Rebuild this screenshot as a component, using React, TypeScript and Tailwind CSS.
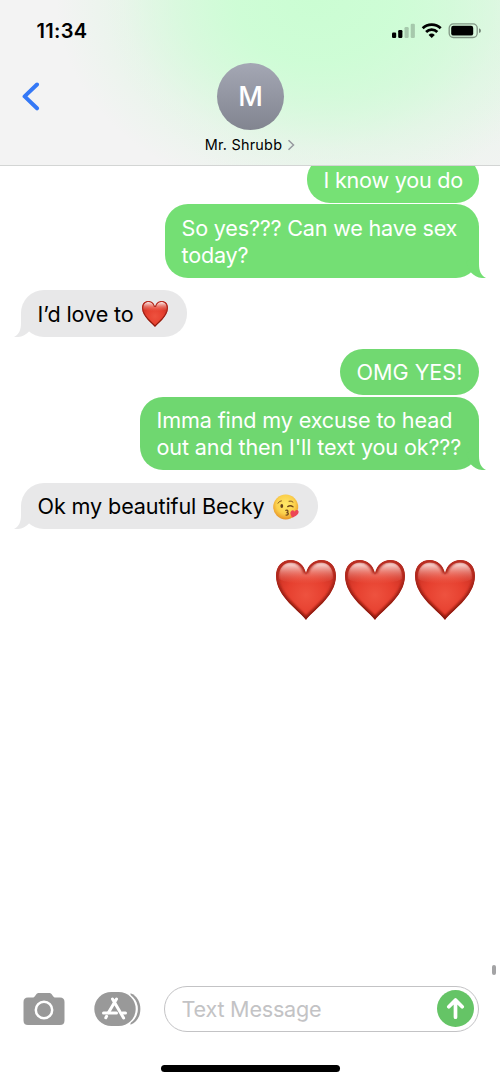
import type { ReactNode } from 'react'
import clsx from 'clsx'

interface BubbleProps {
  sent?: boolean
  tail?: boolean
  className?: string
  children: ReactNode
}

function Tail({ sent }: { sent?: boolean }) {
  return (
    <svg
      viewBox="0 0 20 24"
      className={clsx(
        'absolute bottom-0 h-6 w-5 fill-current',
        sent ? '-right-[7px]' : '-left-[7px] -scale-x-100'
      )}
    >
      <path d="M13 0V10C13 17 15 21.5 20 24C14 24.6 8.5 22.5 5 18.5L0 8Z" />
    </svg>
  )
}

function Bubble({ sent, tail, className, children }: BubbleProps) {
  return (
    <div
      className={clsx(
        'relative rounded-[23px] pt-[10.5px] pl-[16.5px] text-[21.6px] leading-[27px] whitespace-nowrap',
        sent ? 'self-end' : 'self-start bg-[#e8e8e9] text-[#e8e8e9]',
        className
      )}
    >
      {tail && <Tail sent={sent} />}
      <div className={clsx('relative', sent ? 'text-white' : 'text-black')}>{children}</div>
    </div>
  )
}

function Heart({ id, className }: { id: string; className?: string }) {
  const shape =
    'M30 60C25 52 0 37 0 16C0 6 6 0 15 0C22 0 28 5 30 13C32 5 38 0 45 0C54 0 60 6 60 16C60 37 35 52 30 60Z'
  return (
    <svg viewBox="0 0 60 60" className={className}>
      <defs>
        <radialGradient id={`${id}-body`} cx="30" cy="35" r="38" gradientUnits="userSpaceOnUse">
          <stop offset="0" stopColor="#ee523f" />
          <stop offset="0.5" stopColor="#e6402f" />
          <stop offset="1" stopColor="#c52d21" />
        </radialGradient>
        <linearGradient id={`${id}-shine`} x1="0" y1="2" x2="0" y2="24" gradientUnits="userSpaceOnUse">
          <stop offset="0" stopColor="#fff" stopOpacity="0.95" />
          <stop offset="0.45" stopColor="#ffd0c8" stopOpacity="0.45" />
          <stop offset="1" stopColor="#f0705f" stopOpacity="0" />
        </linearGradient>
        <linearGradient id={`${id}-edge`} x1="0" y1="0" x2="0" y2="60" gradientUnits="userSpaceOnUse">
          <stop offset="0" stopColor="#b82e24" />
          <stop offset="1" stopColor="#861509" />
        </linearGradient>
        <clipPath id={`${id}-clip`}>
          <path d={shape} />
        </clipPath>
        <filter id={`${id}-soft`}>
          <feGaussianBlur stdDeviation="1.2" />
        </filter>
      </defs>
      <g clipPath={`url(#${id}-clip)`}>
        <path d={shape} fill={`url(#${id}-body)`} />
        <path
          d="M3 19C2 8 8 2.5 15 2.5C22 2.5 27 7 30 15C33 7 38 2.5 45 2.5C52 2.5 58 8 57 19C48 25 12 25 3 19Z"
          fill={`url(#${id}-shine)`}
        />
        <path d={shape} fill="none" stroke={`url(#${id}-edge)`} strokeWidth="5" filter={`url(#${id}-soft)`} />
      </g>
    </svg>
  )
}

function KissFace({ className }: { className?: string }) {
  return (
    <svg viewBox="0 0 26 26" className={className}>
      <defs>
        <radialGradient id="face" cx="0.5" cy="0.4" r="0.62">
          <stop offset="0" stopColor="#ffe969" />
          <stop offset="0.6" stopColor="#fbd04c" />
          <stop offset="1" stopColor="#e58d22" />
        </radialGradient>
      </defs>
      <circle cx="12.7" cy="13" r="12.5" fill="url(#face)" />
      <g fill="none" stroke="#70451a" strokeLinecap="round">
        <path d="M5 9.2Q6.3 6.8 8.4 6.8M16 7.2Q18.4 6.4 20 8" strokeWidth="0.9" />
        <path d="M14.7 12.6Q17.3 10.8 20 12.8" strokeWidth="1.3" />
        <path d="M12.8 16.3C15.4 15.8 15.8 18 13.5 18.6C16.3 18.7 15.8 21.3 13 21" strokeWidth="1.2" />
      </g>
      <ellipse cx="8.8" cy="12" rx="1.4" ry="2" fill="#65401b" />
      <path
        d="M19.3 23.6C17.7 21.2 16.4 18.6 18.2 16.9C19.7 15.6 21.1 16.5 21.4 17.8C22.4 15.8 24.8 15.5 25.5 17.3C26.3 19.8 22.8 22.5 19.3 23.6Z"
        fill="#ec4656"
      />
    </svg>
  )
}

function StatusIcons() {
  return (
    <svg viewBox="0 0 90 16" className="h-4 w-[90px]">
      <rect x="0" y="9.5" width="4.2" height="5.5" rx="1.2" />
      <rect x="6.2" y="7" width="4.2" height="8" rx="1.2" />
      <rect x="12.5" y="4" width="4.2" height="11" rx="1.2" opacity="0.2" />
      <rect x="18.7" y="0.8" width="4.2" height="14.2" rx="1.2" opacity="0.2" />
      <g fill="none" stroke="#000" strokeWidth="2.8">
        <path d="M30.7 5.3A13 13 0 0 1 48.7 5.3" />
        <path d="M34.1 9A8 8 0 0 1 45.3 9" />
      </g>
      <path d="M39.7 15L36.6 11.9A4.5 4.5 0 0 1 42.8 11.9Z" />
      <rect x="57.2" y="0.9" width="28" height="13.6" rx="4.2" fill="none" stroke="#000" strokeOpacity="0.4" strokeWidth="1.3" />
      <rect x="59.2" y="2.8" width="22" height="9.8" rx="2.2" />
      <path d="M87 5.3Q89 6 89 7.7T87 10.1Z" opacity="0.45" />
    </svg>
  )
}

function Header() {
  return (
    <header className="relative z-10 h-[166px] shrink-0 border-b border-[#d3d5d4] bg-[#f3f3f3] bg-[radial-gradient(ellipse_225px_175px_at_315px_0px,#cbfdd3_0%,rgba(205,253,213,0.95)_35%,rgba(208,251,215,0.7)_60%,rgba(215,248,220,0.35)_85%,rgba(243,243,243,0)_115%),radial-gradient(ellipse_250px_190px_at_380px_0px,rgba(205,252,212,0.7)_0%,rgba(208,251,215,0.5)_45%,rgba(225,246,228,0.3)_80%,rgba(243,243,243,0)_110%)]">
      <div className="flex h-[60px] items-center justify-between pl-[36.5px] pr-[18px] pt-[2px]">
        <span className="text-[20px] font-semibold tracking-[0.3px]">11:34</span>
        <StatusIcons />
      </div>
      <div className="grid grid-cols-[1fr_auto_1fr] pt-[3px]">
        <svg viewBox="0 0 20 30" className="ml-[20px] mt-[19px] h-[30px] w-5 fill-none stroke-[#3478f6]">
          <path d="M17 2.5L4.6 14.4L17 26.3" strokeWidth="4" strokeLinecap="round" strokeLinejoin="round" />
        </svg>
        <div className="flex flex-col items-center">
          <div className="ml-px flex size-[67px] items-center justify-center rounded-full bg-linear-to-b from-[#a4a7b4] to-[#828590] pt-[2px] text-[27px] font-medium text-white">
            M
          </div>
          <div className="mt-[4.5px] flex items-center gap-[5px] text-[14.4px] leading-5">
            <span className="tracking-[0.25px]">Mr. Shrubb</span>
            <svg viewBox="0 0 8 12" className="h-3 w-2 fill-none stroke-[#96989f]">
              <path d="M1.5 1.2L6.5 6L1.5 10.8" strokeWidth="1.5" />
            </svg>
          </div>
        </div>
      </div>
    </header>
  )
}

function Composer() {
  return (
    <footer className="flex h-[98px] shrink-0 flex-col items-center">
      <div className="flex h-[47px] w-full items-center pl-[22.5px]">
        <svg viewBox="0 0 42 34" className="h-[34px] w-[42px] fill-[#999]">
          <path d="M5 5.5H10C11.5 5.5 12.2 3.5 13.5 2C14.3 1.2 15 1 16 1H26C27 1 27.7 1.2 28.5 2C29.8 3.5 30.5 5.5 32 5.5H37Q41.5 5.5 41.5 10V28.5Q41.5 33 37 33H5Q0.5 33 0.5 28.5V10Q0.5 5.5 5 5.5Z" />
          <circle cx="21" cy="18" r="8.2" fill="none" stroke="#fff" strokeWidth="2.5" />
        </svg>
        <svg viewBox="0 0 48 34" className="ml-[29px] h-[34px] w-12 fill-[#999]">
          <path d="M36.5 1.2C49.7 6 49.7 28 36.5 32.8Z" />
          <rect x="0.3" y="0" width="43.6" height="34" rx="17" fill="#fff" />
          <rect x="0.3" y="0" width="41.4" height="34" rx="17" />
          <g fill="none" stroke="#fff" strokeWidth="3" strokeLinecap="round">
            <path d="M18.5 7L29.6 26M22.5 7L14.4 20.8M12.6 24.3L11.8 25.8" />
            <path d="M9.5 21H22.5M28.5 21H31.5" />
          </g>
        </svg>
        <div className="ml-[22px] flex h-[46px] w-[315px] items-center justify-between rounded-full border-[1.5px] border-[#c3c3c5] pl-[17px] pr-[4px]">
          <span className="pt-px text-[21.6px] tracking-[-0.22px] text-[#c3c3c5]">Text Message</span>
          <svg viewBox="0 0 36 36" className="size-[37px]">
            <circle cx="18" cy="18" r="18" fill="#65c466" />
            <path
              d="M18 26.5V10.5M11.5 16.3L18 9.8L24.5 16.3"
              fill="none"
              stroke="#fff"
              strokeWidth="3.6"
              strokeLinecap="round"
              strokeLinejoin="round"
            />
          </svg>
        </div>
      </div>
      <div className="mt-[33px] h-[7px] w-[179px] rounded-full bg-black" />
    </footer>
  )
}

export default function App() {
  return (
    <div className="flex h-[1083px] w-[500px] flex-col overflow-hidden bg-white font-['Inter',sans-serif] text-black">
      <Header />
      <main className="relative -mt-[10px] flex flex-1 flex-col pl-[21px] pr-[21.5px]">
        <Bubble sent className="h-[46.5px] w-[171.5px] bg-[#76e175] tracking-[-0.22px]">
          I know you do
        </Bubble>
        <Bubble sent tail className="mt-[1.5px] h-[73.5px] w-[313.5px] bg-[#74df74] tracking-[-0.2px] text-[#74df74]">
          So yes??? Can we have sex
          <br />
          today?
        </Bubble>
        <Bubble tail className="mt-[12.5px] h-[46.5px] w-[165.5px] tracking-[-0.1px]">
          <span className="flex items-center">
            I’d love to
            <Heart id="inline" className="ml-[8px] size-[26px]" />
          </span>
        </Bubble>
        <Bubble sent className="mt-[12px] h-[46.5px] w-[138.5px] bg-[#71d971]">
          OMG YES!
        </Bubble>
        <Bubble sent tail className="mt-[1.5px] h-[73.5px] w-[338.5px] bg-[#6fd770] tracking-[-0.13px] text-[#6fd770]">
          Imma find my excuse to head
          <br />
          out and then I'll text you ok???
        </Bubble>
        <Bubble tail className="mt-[12.5px] h-[46.5px] w-[296.5px] tracking-[-0.12px]">
          <span className="flex items-center">
            Ok my beautiful Becky
            <KissFace className="ml-[8px] size-[26px]" />
          </span>
        </Bubble>
        <div className="mr-[4px] mt-[31px] flex gap-[9.5px] self-end">
          <Heart id="first" className="size-[60px]" />
          <Heart id="second" className="size-[60px]" />
          <Heart id="third" className="size-[60px]" />
        </div>
        {/* scroll indicator */}
        <div className="absolute bottom-[10px] right-[4px] h-[10px] w-[4px] rounded-full bg-[#a3a3a5]" />
      </main>
      <Composer />
    </div>
  )
}
